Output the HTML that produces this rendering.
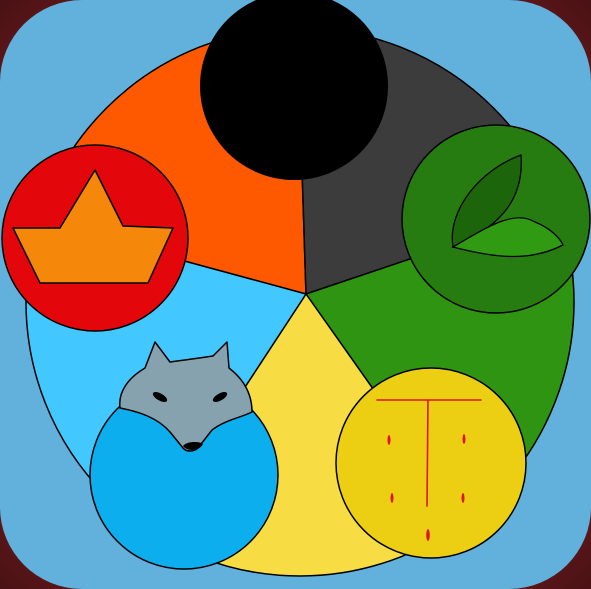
<!DOCTYPE html>
<html><head><meta charset="utf-8"><style>
html,body{margin:0;padding:0;width:591px;height:589px;overflow:hidden;background:#5a1a1e}
svg{display:block}
</style></head><body>
<svg width="591" height="589" viewBox="0 0 591 589" xmlns="http://www.w3.org/2000/svg">
<defs>
<radialGradient id="bg" cx="0.5" cy="0.5" r="0.7">
<stop offset="0.6" stop-color="#8a2228"/><stop offset="1" stop-color="#4a1214"/>
</radialGradient>
<clipPath id="big"><circle cx="300" cy="302" r="274"/></clipPath>
</defs>
<rect width="591" height="589" fill="url(#bg)"/>
<rect x="0" y="0" width="591" height="589" rx="82" ry="82" fill="#62b0dc"/>
<g clip-path="url(#big)" stroke="#000" stroke-width="1.5" stroke-linejoin="round">
<polygon points="306,294 296,-20 -40,-40 -48,198" fill="#fe5900"/>
<polygon points="306,294 296,-20 640,-40 609,192" fill="#3c3c3c"/>
<polygon points="306,294 609,192 640,700 566,662" fill="#2f9412"/>
<polygon points="306,294 566,662 78,642" fill="#f7dc43"/>
<polygon points="306,294 78,642 -40,700 -48,198" fill="#42c8ff"/>
</g>
<circle cx="300" cy="302" r="274" fill="none" stroke="#000" stroke-width="1.5"/>
<!-- black circle -->
<circle cx="294" cy="86" r="94" fill="#000"/>
<!-- red circle with boat -->
<circle cx="95" cy="238" r="93" fill="#e3070b" stroke="#000" stroke-width="1.5"/>
<polygon points="13,228 60,228 95,170 123,226 173,228 148,283 40,283" fill="#f5870a" stroke="#000" stroke-width="1.5" stroke-linejoin="round"/>
<!-- green circle -->
<circle cx="496" cy="219" r="94" fill="#267c10" stroke="#000" stroke-width="1.5"/>
<path d="M453,247 C447,210 480,170 521,155 C524,195 505,225 453,247 Z" fill="#1d650b" stroke="#000" stroke-width="1.3"/>
<path d="M453,247 C490,225 515,210 535,222 C550,228 560,238 563,245 C530,262 495,258 453,247 Z" fill="#2f9a12" stroke="#000" stroke-width="1.3"/>
<!-- yellow circle -->
<circle cx="431" cy="463" r="95" fill="#eccf13" stroke="#000" stroke-width="1.5"/>
<g stroke="#e0151a" stroke-width="1.6" stroke-linecap="round" fill="none">
<path d="M377,400 L481,400"/>
<path d="M428,400 L427,506"/>
</g>
<g fill="#e0151a">
<ellipse cx="389" cy="440" rx="1.5" ry="5"/>
<ellipse cx="464" cy="439" rx="1.5" ry="5"/>
<ellipse cx="392" cy="498" rx="1.5" ry="5"/>
<ellipse cx="463" cy="498" rx="1.5" ry="5"/>
<ellipse cx="428" cy="535" rx="1.8" ry="6"/>
</g>
<!-- blue circle -->
<circle cx="184" cy="475" r="94" fill="#0daeee" stroke="#000" stroke-width="1.5"/>
<!-- wolf head -->
<path d="M120,408 C118,392 128,378 145,368 L155,342 L170,362 C185,360 200,358 213,356 L227,342 L229,368 C242,378 252,392 252,412 C240,418 225,420 212,430 L198,448 C194,452 186,452 183,448 L170,432 C158,418 140,412 120,408 Z" fill="#86a2ae" stroke="#000" stroke-width="1.5" stroke-linejoin="round"/>
<ellipse cx="160" cy="397" rx="8" ry="3.5" transform="rotate(30 160 397)" fill="#000"/>
<ellipse cx="220" cy="397" rx="8" ry="3.5" transform="rotate(-30 220 397)" fill="#000"/>
<path d="M183,446 C186,441 200,441 203,444 C200,451 187,452 183,446 Z" fill="#000"/>
</svg>
</body></html>
